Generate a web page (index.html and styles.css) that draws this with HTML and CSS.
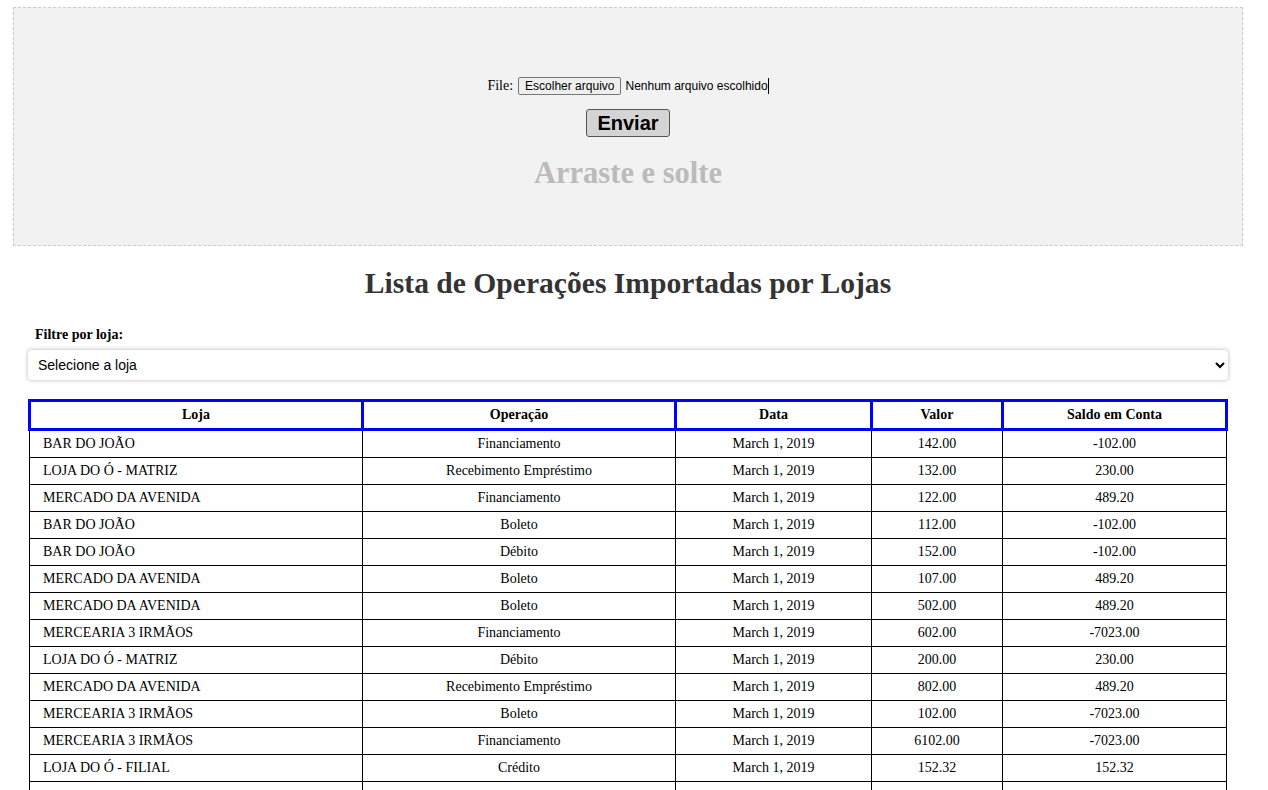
FILE: index.html
```html
<!DOCTYPE html>
<html lang="pt-BR">
<head>
<meta charset="utf-8">
<title>Lista de Operações</title>
<link rel="stylesheet" href="styles.css">
</head>
<body>
<div class="page">
  <form class="dropzone">
    <div class="file-row">
      <span class="file-label">File:</span>
      <span class="file-btn">Escolher arquivo</span>
      <span class="file-name">Nenhum arquivo escolhido</span>
    </div>
    <button type="button" class="send-btn">Enviar</button>
    <div class="drop-hint">Arraste e solte</div>
  </form>

  <div class="content">
    <h1 class="title">Lista de Operações Importadas por Lojas</h1>
    <label class="filter-label" for="loja">Filtre por loja:</label>
    <select id="loja" class="filter-select">
      <option>Selecione a loja</option>
    </select>

    <table class="ops">
      <colgroup>
        <col class="c-loja"><col class="c-op"><col class="c-data"><col class="c-valor"><col class="c-saldo">
      </colgroup>
      <thead>
        <tr><th>Loja</th><th>Operação</th><th>Data</th><th>Valor</th><th>Saldo em Conta</th></tr>
      </thead>
      <tbody>
        <tr><td>BAR DO JOÃO</td><td>Financiamento</td><td>March 1, 2019</td><td>142.00</td><td>-102.00</td></tr>
        <tr><td>LOJA DO Ó - MATRIZ</td><td>Recebimento Empréstimo</td><td>March 1, 2019</td><td>132.00</td><td>230.00</td></tr>
        <tr><td>MERCADO DA AVENIDA</td><td>Financiamento</td><td>March 1, 2019</td><td>122.00</td><td>489.20</td></tr>
        <tr><td>BAR DO JOÃO</td><td>Boleto</td><td>March 1, 2019</td><td>112.00</td><td>-102.00</td></tr>
        <tr><td>BAR DO JOÃO</td><td>Débito</td><td>March 1, 2019</td><td>152.00</td><td>-102.00</td></tr>
        <tr><td>MERCADO DA AVENIDA</td><td>Boleto</td><td>March 1, 2019</td><td>107.00</td><td>489.20</td></tr>
        <tr><td>MERCADO DA AVENIDA</td><td>Boleto</td><td>March 1, 2019</td><td>502.00</td><td>489.20</td></tr>
        <tr><td>MERCEARIA 3 IRMÃOS</td><td>Financiamento</td><td>March 1, 2019</td><td>602.00</td><td>-7023.00</td></tr>
        <tr><td>LOJA DO Ó - MATRIZ</td><td>Débito</td><td>March 1, 2019</td><td>200.00</td><td>230.00</td></tr>
        <tr><td>MERCADO DA AVENIDA</td><td>Recebimento Empréstimo</td><td>March 1, 2019</td><td>802.00</td><td>489.20</td></tr>
        <tr><td>MERCEARIA 3 IRMÃOS</td><td>Boleto</td><td>March 1, 2019</td><td>102.00</td><td>-7023.00</td></tr>
        <tr><td>MERCEARIA 3 IRMÃOS</td><td>Financiamento</td><td>March 1, 2019</td><td>6102.00</td><td>-7023.00</td></tr>
        <tr><td>LOJA DO Ó - FILIAL</td><td>Crédito</td><td>March 1, 2019</td><td>152.32</td><td>152.32</td></tr>
        <tr><td>&nbsp;</td><td>&nbsp;</td><td>&nbsp;</td><td>&nbsp;</td><td>&nbsp;</td></tr>
      </tbody>
    </table>
  </div>
</div>
</body>
</html>
```

FILE: styles.css
```css
html, body {
  margin: 0;
  padding: 0;
  background: #fff;
}

body {
  font-family: "Liberation Serif", "Times New Roman", serif;
  font-size: 14px;
  color: #000;
}

.page {
  margin: 7px 25px 0 13px;
}

.dropzone {
  box-sizing: border-box;
  height: 239px;
  margin: 0;
  padding-top: 68px;
  background: #f2f2f2;
  border: 1px dashed #cccccc;
  display: flex;
  flex-direction: column;
  align-items: center;
}

.file-row {
  display: flex;
  align-items: center;
  height: 20px;
}

.file-label {
  margin-right: 5px;
}

.file-btn {
  box-sizing: border-box;
  height: 18px;
  padding: 0 6px;
  font-family: "Liberation Sans", Arial, sans-serif;
  font-size: 12px;
  line-height: 16px;
  background: #efefef;
  border: 1px solid #767676;
  border-radius: 2px;
  color: #000;
}

.file-name {
  margin-left: 4px;
  font-family: "Liberation Sans", Arial, sans-serif;
  font-size: 12px;
  line-height: 16px;
  padding-right: 0;
  border-right: 1px solid #000;
}

.send-btn {
  box-sizing: border-box;
  margin-top: 13px;
  height: 28px;
  padding: 0 10px;
  font-family: "Liberation Sans", Arial, sans-serif;
  font-size: 20px;
  font-weight: bold;
  line-height: 26px;
  color: #000;
  background: #d4d4d4;
  border: 1px solid #555;
  border-radius: 3px;
}

.drop-hint {
  margin-top: 19px;
  font-size: 30.5px;
  font-weight: bold;
  line-height: 34px;
  color: #bbbbbb;
}

.content {
  padding: 0 15px;
  display: flex;
  flex-direction: column;
}

.title {
  margin: 20px 0 0;
  font-size: 29.6px;
  line-height: 34px;
  font-weight: bold;
  color: #333;
  text-align: center;
}

.filter-label {
  margin: 27px 0 0 7px;
  font-weight: bold;
  line-height: 16px;
}

.filter-select {
  box-sizing: border-box;
  margin-top: 7px;
  width: 100%;
  height: 30px;
  padding: 0 6px;
  font-family: "Liberation Sans", Arial, sans-serif;
  font-size: 14px;
  color: #000;
  background: #fff;
  border: none;
  border-radius: 4px;
  box-shadow: 0 0 4px rgba(0, 0, 0, 0.3);
}

.ops {
  margin-top: 19px;
  width: 1197px;
  border-collapse: collapse;
  table-layout: fixed;
}

.c-loja { width: 333px; }
.c-op { width: 313px; }
.c-data { width: 196px; }
.c-valor { width: 131px; }
.c-saldo { width: 224px; }

.ops th {
  border: 3px solid #0000ff;
  padding: 5px 5px;
  font-weight: bold;
  line-height: 16px;
  text-align: center;
}

.ops td {
  border: 1px solid #000;
  padding: 5px 5px;
  line-height: 16px;
  text-align: center;
}

.ops td:first-child {
  text-align: left;
  padding-left: 13px;
}
```
